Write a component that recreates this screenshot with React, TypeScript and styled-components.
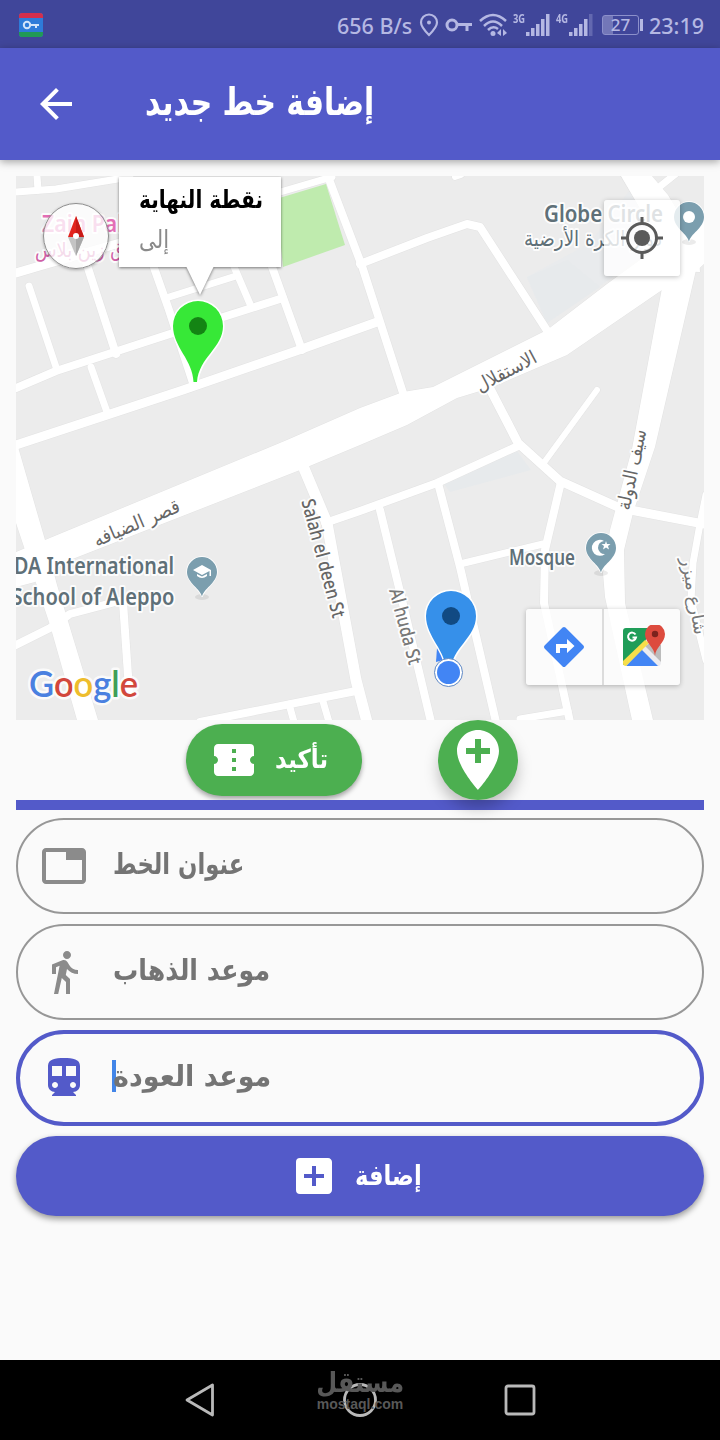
import React from 'react'
import styled, { createGlobalStyle } from 'styled-components'
import {
  MdAddBox,
  MdAddLocation,
  MdArrowBack,
  MdConfirmationNumber,
  MdDirectionsSubway,
  MdDirectionsWalk,
  MdTab,
} from 'react-icons/md'

const indigo = '#535ac9'
const green = '#4caf50'
const arabicFont = "'DejaVu Sans', 'Noto Sans', sans-serif"

const GlobalStyle = createGlobalStyle`
  * {
    box-sizing: border-box;
  }
  body {
    margin: 0;
    background: #fafafa;
    font-family: ${arabicFont};
  }
  svg {
    display: block;
    flex: none;
  }
`

const Screen = styled.div`
  display: flex;
  flex-flow: column;
  width: 720px;
  height: 1440px;
  overflow: hidden;
  background: #fafafa;
`

const StatusBar = styled.div`
  display: flex;
  align-items: center;
  height: 48px;
  padding: 2px 15px 0 19px;
  background: #40469a;
  color: #b5b8e3;
  font: 500 21.500px 'Noto Sans', sans-serif;
`

const StatusItem = styled.span<{ $width: number; $gap?: number }>`
  display: flex;
  width: ${(p) => p.$width}px;
  margin-left: ${(p) => p.$gap || 0}px;
  white-space: nowrap;
`

const Spacer = styled.div`
  flex: 1;
`

const AppBar = styled.header`
  display: flex;
  align-items: center;
  height: 112px;
  padding-left: 32px;
  background: ${indigo};
  color: #fff;
  box-shadow: 0 2px 8px rgba(0, 0, 0, 0.35);
`

const Label = styled.span<{ $size: number; $scale?: number; $lift?: number }>`
  direction: rtl;
  white-space: nowrap;
  font-size: ${(p) => p.$size}px;
  font-weight: 700;
  line-height: 1.2;
  padding-bottom: ${(p) => p.$lift || 0}px;
  transform: scaleX(${(p) => p.$scale || 1});
  transform-origin: left center;
`

const BarTitle = styled(Label)`
  margin-left: 65px;
`

const Content = styled.main`
  display: flex;
  flex-flow: column;
  flex: 1;
  padding: 16px 16px 0;
`

const MapView = styled.div`
  position: relative;
  height: 544px;
  overflow: hidden;
  background: #ececec;
`

const Compass = styled.div`
  position: absolute;
  left: 27px;
  top: 27px;
  width: 66px;
  height: 66px;
  border-radius: 50%;
  border: 1px solid #8f8f8f;
  background: rgba(255, 255, 255, 0.78);
  box-shadow: 0 1px 3px rgba(0, 0, 0, 0.3);
`

const Callout = styled.div`
  position: absolute;
  left: 103px;
  top: 1px;
  display: flex;
  flex-flow: column;
  align-items: flex-start;
  width: 162px;
  height: 90px;
  padding: 8px 20px 0;
  background: #fff;
  filter: drop-shadow(0 1px 1.5px rgba(0, 0, 0, 0.5));

  &::after {
    content: '';
    position: absolute;
    left: 67px;
    top: 89px;
    border: 14px solid transparent;
    border-top: 29px solid #fff;
    border-bottom: 0;
  }
`

const CalloutTitle = styled(Label)`
  height: 40px;
  color: #000;
`

const CalloutText = styled(Label)`
  color: #8a8a8a;
  font-weight: 400;
`

const MapControls = styled.div<{ $top: number }>`
  position: absolute;
  right: 24px;
  top: ${(p) => p.$top}px;
  display: flex;
  height: 76px;
  border-radius: 3px;
  background: rgba(255, 255, 255, 0.8);
  box-shadow: 0 1px 5px rgba(0, 0, 0, 0.25);
`

const MapButton = styled.div`
  display: flex;
  align-items: center;
  justify-content: center;
  width: 76px;

  & + & {
    width: 78px;
    border-left: 2px solid #dcdcdc;
  }
`

const Actions = styled.div`
  display: flex;
  align-items: center;
  height: 80px;
  padding-left: 170px;
`

const ConfirmButton = styled.div`
  display: flex;
  align-items: center;
  width: 176px;
  height: 72px;
  padding-left: 24px;
  border-radius: 36px;
  background: ${green};
  color: #fff;
  box-shadow: 0 3px 5px rgba(0, 0, 0, 0.35);

  & > span {
    margin-left: 17px;
  }
`

const AddPointButton = styled.div`
  position: relative;
  z-index: 1;
  display: flex;
  align-items: center;
  justify-content: center;
  width: 80px;
  height: 80px;
  margin-left: 76px;
  border-radius: 50%;
  background: ${green};
  color: #fff;
  box-shadow: 0 9px 15px -1px rgba(0, 0, 0, 0.26);
`

const Divider = styled.div`
  height: 10px;
  margin-bottom: 8px;
  background: ${indigo};
`

const Field = styled.div<{ $focused?: boolean }>`
  display: flex;
  align-items: center;
  height: 96px;
  margin-bottom: 10px;
  padding-left: ${(p) => (p.$focused ? 20 : 22)}px;
  border: ${(p) => (p.$focused ? `4px solid ${indigo}` : '2px solid #979797')};
  border-radius: 48px;
  color: ${(p) => (p.$focused ? indigo : '#8b8b8b')};
`

const Hint = styled(Label)`
  margin-left: 25px;
  color: #747474;
`

const Caret = styled.div`
  width: 4px;
  height: 32px;
  margin: -4px -28px 0 24px;
  background: #4285e8;
`

const SubmitButton = styled.div`
  display: flex;
  align-items: center;
  height: 80px;
  padding-left: 274px;
  border-radius: 40px;
  background: ${indigo};
  color: #fff;
  box-shadow: 0 3px 6px rgba(0, 0, 0, 0.4);

  & > span {
    margin-left: 17px;
  }
`

const NavBar = styled.nav`
  position: relative;
  display: flex;
  align-items: center;
  justify-content: space-between;
  height: 80px;
  padding: 0 183px;
  background: #000;
`

const Watermark = styled.div`
  position: absolute;
  left: 300px;
  top: 6px;
  display: flex;
  flex-flow: column;
  align-items: center;
  width: 120px;
  color: #585858;
`

const WatermarkName = styled(Label)`
  transform-origin: center;
`

const WatermarkSite = styled.span`
  margin-top: -4px;
  font: 700 14px 'Liberation Sans', sans-serif;
`

const road = (d: string, w = 8) => ({ d, w })

const roads = [
  road('M16 192L56 189L130 177', 7),
  road('M37 176L38 190', 7),
  road('M270 195L332 177', 7),
  road('M327 174L362 266L404 396'),
  road('M152 262L169 310L194 386'),
  road('M86 262L116 354'),
  road('M29 286L57 370', 7),
  road('M91 367L107 412', 7),
  road('M16 388L56 371L173 333L283 298'),
  road('M166 298L236 276', 7),
  road('M232 262L250 304', 7),
  road('M271 264L302 350'),
  road('M16 273L43 265L120 243L200 222', 9),
  road('M10 447L183 390L299 350L377 322', 9),
  road('M455 177L461 175', 6),
  road('M360 264L427 238L467 224L480 227L548 332'),
  road('M658 188L678 172', 7),
  road('M597 390L543 464', 6),
  road('M488 385L518 443L560 481L620 508L704 524', 9),
  road('M325 523L360 511L437 483L518 446'),
  road('M380 510L402 600L431 722'),
  road('M438 483L460 567L496 722'),
  road('M460 564L543 544', 7),
  road('M561 482L545 550L544 603L570 722'),
  road('M706 495L700 524L693 563L691 600L706 660', 7),
  road('M303 466L327 523L356 680L367 722', 11),
  road('M520 719L568 711', 7),
  road('M200 722L356 691', 8),
  road('M289 704L294 722', 7),
  road('M322 698L329 722', 7),
  road('M16 645L50 628L70 614L123 600', 8),
  road('M123 602L129 690', 8),
]

const highways = [
  'M16 552L45 540L287 440L360 408L403 392L433 387L457 375L547 330L607 284L640 260L704 214V264L695 272L662 290L567 355L490 388L457 398L407 425L360 445L300 470L70 560L35 582L16 587Z',
  'M621 176H652L668 195L698 245L700 272L655 270L645 217Z',
  'M662 288L632 449L610 530L603 573L605 597L632 720H653L625 603L624 550L633 513L655 447L696 270Z',
  'M16 440L45 540L57 585L98 720H77L50 625L16 523Z',
]

type MapTextProps = {
  x: number
  y: number
  length: number
  size: number
  color?: string
  weight?: number
  rotate?: number
  font?: string
  children: string
}

const MapText = ({ x, y, length, size, color = '#5f7078', weight = 600, rotate = 0, font = "'Noto Sans'", children }: MapTextProps) => (
  <text
    x={x}
    y={y}
    textAnchor="middle"
    fontFamily={`${font}, 'DejaVu Sans', sans-serif`}
    fontSize={size}
    fontWeight={weight}
    fill={color}
    stroke="#fff"
    strokeOpacity={0.85}
    strokeWidth={4}
    strokeLinejoin="round"
    paintOrder="stroke"
    textLength={length}
    lengthAdjust="spacingAndGlyphs"
    transform={`rotate(${rotate} ${x} ${y})`}
  >
    {children}
  </text>
)

const PoiPin = ({ x, y, children }: { x: number; y: number; children: React.ReactNode }) => (
  <g transform={`translate(${x} ${y})`}>
    <ellipse cx="0" cy="25" rx="7" ry="3" fill="#000" opacity="0.08" />
    <path
      d="M0 25C-1 17-15 11-15 0A15 15 0 1 1 15 0C15 11 1 17 0 25Z"
      fill="#7b9eae"
      stroke="#fff"
      strokeWidth="1.5"
      paintOrder="stroke"
    />
    {children}
  </g>
)

const BigPin = ({ x, y, fill, dot }: { x: number; y: number; fill: string; dot: string }) => (
  <g transform={`translate(${x} ${y})`}>
    <path
      d="M-25 0A25 25 0 1 1 25 0C25 22 1 31-1 56H-4.500C-5 34-25 21-25 0Z"
      fill={fill}
      stroke="#fff"
      strokeWidth="3"
      paintOrder="stroke"
    />
    <circle r="9" fill={dot} />
  </g>
)

const MapCanvas = () => (
  <svg width="688" height="544" viewBox="16 176 688 544">
    <path d="M527 277L590 243L630 190L650 225L640 258L547 323Z" fill="#e9ebed" />
    <path d="M527 277L567 260L600 287L547 323Z" fill="#e7eaec" />
    <path d="M443 483L517 451L531 470L450 492Z" fill="#e7eaec" />
    <g fill="none" stroke="#e3e3e3" strokeLinecap="round" strokeLinejoin="round">
      {roads.map((r) => (
        <path key={r.d} d={r.d} strokeWidth={r.w + 1} />
      ))}
      {highways.map((d) => (
        <path key={d} d={d} strokeWidth="1" />
      ))}
    </g>
    <g fill="none" stroke="#fff" strokeLinecap="round" strokeLinejoin="round">
      {roads.map((r) => (
        <path key={r.d} d={r.d} strokeWidth={r.w} />
      ))}
    </g>
    {highways.map((d) => (
      <path key={d} d={d} fill="#fff" />
    ))}
    <path d="M276 199L326 184L345 245L283 267Z" fill="#bfebae" />

    <MapText x={94} y={232} length={104} size={24} color="#e36fb6">Zain Palas</MapText>
    <MapText x={91} y={257} length={112} size={20} color="#cf5fa5" weight={400} font="'DejaVu Sans'">فندق زين بلاس</MapText>
    <MapText x={603.500} y={222} length={119} size={23}>Globe Circle</MapText>
    <MapText x={593} y={246} length={138} size={21} weight={400} font="'DejaVu Sans'">دوار الكرة الأرضية</MapText>
    <MapText x={509} y={377} length={66} size={19} weight={400} color="#666" rotate={-28} font="'DejaVu Sans'">الاستقلال</MapText>
    <MapText x={139} y={529} length={92} size={19} weight={400} color="#666" rotate={-23} font="'DejaVu Sans'">قصر الضيافه</MapText>
    <MapText x={638} y={471} length={82} size={19} weight={400} color="#666" rotate={-78} font="'DejaVu Sans'">سيف الدولة</MapText>
    <MapText x={688} y={597} length={78} size={17} weight={400} color="#777" rotate={80} font="'DejaVu Sans'">شارع ميزر</MapText>
    <MapText x={317} y={560} length={122} size={19} weight={500} color="#666" rotate={75}>Salah el deen St</MapText>
    <MapText x={399} y={628} length={78} size={19} weight={500} color="#777" rotate={75}>Al huda St</MapText>
    <MapText x={94} y={574} length={160} size={23}>DA International</MapText>
    <MapText x={93} y={605} length={163} size={23}>School of Aleppo</MapText>
    <MapText x={542} y={565} length={66} size={21}>Mosque</MapText>

    <PoiPin x={202} y={572}>
      <path d="M-9-2L0-7L9-2V4H7.500V-1L0 3Z" fill="#fff" />
      <path d="M-5 2L0 4.500L5 2V4Q0 8-5 4Z" fill="#fff" />
    </PoiPin>
    <PoiPin x={601} y={548}>
      <path d="M3-7A8 8 0 1 0 4 6A6.500 6.500 0 0 1 3-7Z" fill="#fff" />
      <path d="M5-7L6-4H9.500L7-2L8 1.500L5-.5L2 1.500L3-2L.5-4H4Z" fill="#fff" />
    </PoiPin>
    <PoiPin x={689} y={217}>
      <circle r="6" fill="#fff" />
    </PoiPin>

    <path d="M437 648L455 657L436 662Z" fill="#4285f4" />
    <BigPin x={198} y={326} fill="#37e837" dot="#148414" />
    <BigPin x={451} y={616} fill="#3690ea" dot="#114a83" />
    <circle cx="448.500" cy="672.500" r="14" fill="#fff" stroke="#5d87c4" strokeWidth="1" />
    <circle cx="448.500" cy="672.500" r="11.500" fill="#4285f4" />

    <text
      x="29"
      y="697"
      fontFamily="Lato, sans-serif"
      fontSize="36"
      fontWeight="600"
      stroke="#fff"
      strokeOpacity={0.8}
      strokeWidth="5"
      strokeLinejoin="round"
      paintOrder="stroke"
      textLength="109"
      lengthAdjust="spacingAndGlyphs"
    >
      <tspan fill="#4a80e0">G</tspan>
      <tspan fill="#d2473c">o</tspan>
      <tspan fill="#eebd2d">o</tspan>
      <tspan fill="#4a80e0">g</tspan>
      <tspan fill="#3f9f57">l</tspan>
      <tspan fill="#d2473c">e</tspan>
    </text>
  </svg>
)

const CompassNeedle = () => (
  <svg width="64" height="64" viewBox="0 0 64 64">
    <path d="M32 12L24 33H40Z" fill="#e2231d" />
    <path d="M32 12L32 33H40Z" fill="#c81a17" />
    <path d="M24 33H40L32 52Z" fill="#c4c4c4" />
    <path d="M32 33H40L32 52Z" fill="#a8a8a8" />
    <circle cx="32" cy="32" r="3" fill="#fff" />
  </svg>
)

const LocateIcon = () => (
  <svg width="44" height="44" viewBox="-22 -22 44 44" fill="none" stroke="#5a5a5a" strokeWidth="3">
    <circle r="14.500" />
    <circle r="8" fill="#5a5a5a" stroke="none" />
    <path d="M0-21V-13M0 13V21M-21 0H-13M13 0H21" />
  </svg>
)

const DirectionsIcon = () => (
  <svg width="42" height="42" viewBox="-21 -21 42 42">
    <path d="M0-18L18 0L0 18L-18 0Z" fill="#4285f4" stroke="#4285f4" strokeWidth="4" strokeLinejoin="round" />
    <path d="M-8 6V-3H3V-8L10.500-1L3 6V1H-4V6Z" fill="#fff" />
  </svg>
)

const MapsIcon = () => (
  <svg width="46" height="44" viewBox="-1 0 46 44">
    <path d="M6 3H30L24 20L4 40Q3 40 3 38V6Q3 3 6 3Z" fill="#1f9d58" />
    <path d="M22 24L39 41H6Z" fill="#4285f4" />
    <path d="M25 21L41 37Q41 41 38 41L22 25Z" fill="#ebebf0" />
    <path d="M30 18L41 20V37L25 21Z" fill="#bcbcbc" />
    <path d="M3 36L25 15L29 18L6 41Q3 41 3 38Z" fill="#f7de4a" />
    <path d="M15.500 9.500A4 4 0 1 0 16 12.500H12.500" fill="none" stroke="#fff" strokeWidth="2" />
    <path d="M35 31C34.500 22 25 18 25 9A10 10 0 0 1 45 9C45 18 35.500 22 35 31Z" fill="#dd4b3e" />
    <circle cx="35" cy="9" r="3.200" fill="#7c231d" />
  </svg>
)

const Signal = ({ weak }: { weak?: boolean }) => (
  <svg width="26" height="22" viewBox="0 0 26 22" fill="#b5b8e3">
    <rect x="1" y="18" width="3.500" height="4" />
    <rect x="6" y="14" width="3.500" height="8" />
    <rect x="11" y="10" width="3.500" height="12" />
    <rect x="16" y="5" width="3.500" height="17" />
    <rect x="21" y="0" width="3.500" height="22" opacity={weak ? 0.3 : 1} />
  </svg>
)

const NetworkType = styled.span`
  width: 12px;
  margin-top: -2px;
  font: 700 13px/12px 'Noto Sans', sans-serif;
  transform: scaleX(0.72);
  transform-origin: left;
`

const Battery = styled.div`
  position: relative;
  display: flex;
  align-items: center;
  justify-content: center;
  width: 37px;
  height: 20px;
  margin-left: 9px;
  border: 1px solid #8c90cb;
  border-radius: 3px;
  background: linear-gradient(90deg, #7377b8 30%, transparent 30%);
  font-size: 17px;
  line-height: 18px;

  &::after {
    content: '';
    position: absolute;
    right: -5px;
    top: 3px;
    width: 3px;
    height: 12px;
    background: #b5b8e3;
  }
`

const StatusIcons = () => (
  <>
    <svg width="24" height="26" viewBox="0 0 24 26">
      <rect y="1" width="24" height="24" rx="3" fill="#2e7bd9" />
      <path d="M0 6V4Q0 1 3 1H21Q24 1 24 4V6Z" fill="#d32e4c" />
      <path d="M0 20H24V22Q24 25 21 25H3Q0 25 0 22Z" fill="#219a56" />
      <circle cx="8" cy="13" r="3.200" fill="none" stroke="#d3e4fa" strokeWidth="2" />
      <path d="M11 13H20M17 13V16" stroke="#d3e4fa" strokeWidth="2" />
    </svg>
    <Spacer />
    <StatusItem $width={82}>656 B/s</StatusItem>
    <svg width="20" height="24" viewBox="0 0 20 24" fill="none" stroke="#b5b8e3" strokeWidth="2.200">
      <path d="M10 22Q2 14 2 9.500A8 8 0 0 1 18 9.500Q18 14 10 22Z" />
      <circle cx="10" cy="9.500" r="2" fill="#b5b8e3" stroke="none" />
    </svg>
    <StatusItem $width={28} $gap={6}>
      <svg width="28" height="16" viewBox="0 0 28 16" fill="none" stroke="#b5b8e3" strokeWidth="3">
        <circle cx="7" cy="8" r="5" />
        <path d="M12 7.500H27M22 8V14" />
      </svg>
    </StatusItem>
    <StatusItem $width={28} $gap={6}>
      <svg width="28" height="24" viewBox="0 0 28 24" fill="none" stroke="#b5b8e3" strokeWidth="2.500">
        <path d="M1 8Q14-4 27 8M5 13Q14 4 23 13M9 17Q14 12 19 16" />
        <circle cx="14" cy="20.500" r="2.500" fill="#b5b8e3" stroke="none" />
        <path d="M22 16V23L18 20ZM24 16V23L28 20Z" fill="#b5b8e3" stroke="none" />
      </svg>
    </StatusItem>
    <StatusItem $width={37} $gap={6}>
      <NetworkType>3G</NetworkType>
      <Signal />
    </StatusItem>
    <StatusItem $width={37} $gap={6}>
      <NetworkType>4G</NetworkType>
      <Signal weak />
    </StatusItem>
    <Battery>27</Battery>
    <StatusItem $width={56} $gap={10}>23:19</StatusItem>
  </>
)

const App = () => (
  <Screen>
    <GlobalStyle />
    <StatusBar>
      <StatusIcons />
    </StatusBar>
    <AppBar>
      <MdArrowBack size={48} />
      <BarTitle $size={38} $scale={0.785} $lift={3}>إضافة خط جديد</BarTitle>
    </AppBar>
    <Content>
      <MapView>
        <MapCanvas />
        <Compass>
          <CompassNeedle />
        </Compass>
        <Callout>
          <CalloutTitle $size={25} $scale={0.805}>نقطة النهاية</CalloutTitle>
          <CalloutText $size={25} $scale={0.85}>إلى</CalloutText>
        </Callout>
        <MapControls $top={24}>
          <MapButton>
            <LocateIcon />
          </MapButton>
        </MapControls>
        <MapControls $top={433}>
          <MapButton>
            <DirectionsIcon />
          </MapButton>
          <MapButton>
            <MapsIcon />
          </MapButton>
        </MapControls>
      </MapView>
      <Actions>
        <ConfirmButton>
          <MdConfirmationNumber size={48} />
          <Label $size={26} $scale={0.88}>تأكيد</Label>
        </ConfirmButton>
        <AddPointButton>
          <MdAddLocation size={72} />
        </AddPointButton>
      </Actions>
      <Divider />
      <Field>
        <MdTab size={48} />
        <Hint $size={29} $scale={0.785} $lift={3}>عنوان الخط</Hint>
      </Field>
      <Field>
        <MdDirectionsWalk size={48} />
        <Hint $size={29} $scale={0.87} $lift={3}>موعد الذهاب</Hint>
      </Field>
      <Field $focused>
        <MdDirectionsSubway size={48} />
        <Caret />
        <Hint $size={29} $scale={0.93} $lift={3}>موعد العودة</Hint>
      </Field>
      <SubmitButton>
        <MdAddBox size={48} />
        <Label $size={28} $scale={0.81}>إضافة</Label>
      </SubmitButton>
    </Content>
    <NavBar>
      <svg width="34" height="36" viewBox="0 0 34 36" fill="none" stroke="#b9b9b9" strokeWidth="2.800" strokeLinejoin="round">
        <path d="M4 18L29.500 3V33Z" />
      </svg>
      <Watermark>
        <WatermarkName $size={28} $scale={0.86}>مستقل</WatermarkName>
        <WatermarkSite>mostaql.com</WatermarkSite>
      </Watermark>
      <svg width="34" height="34" viewBox="0 0 34 34" fill="none" stroke="#b9b9b9" strokeWidth="2.800">
        <circle cx="17" cy="17" r="15.500" />
      </svg>
      <svg width="34" height="34" viewBox="0 0 34 34" fill="none" stroke="#b9b9b9" strokeWidth="2.800">
        <rect x="3" y="3" width="28" height="28" rx="2" />
      </svg>
    </NavBar>
  </Screen>
)

export default App
